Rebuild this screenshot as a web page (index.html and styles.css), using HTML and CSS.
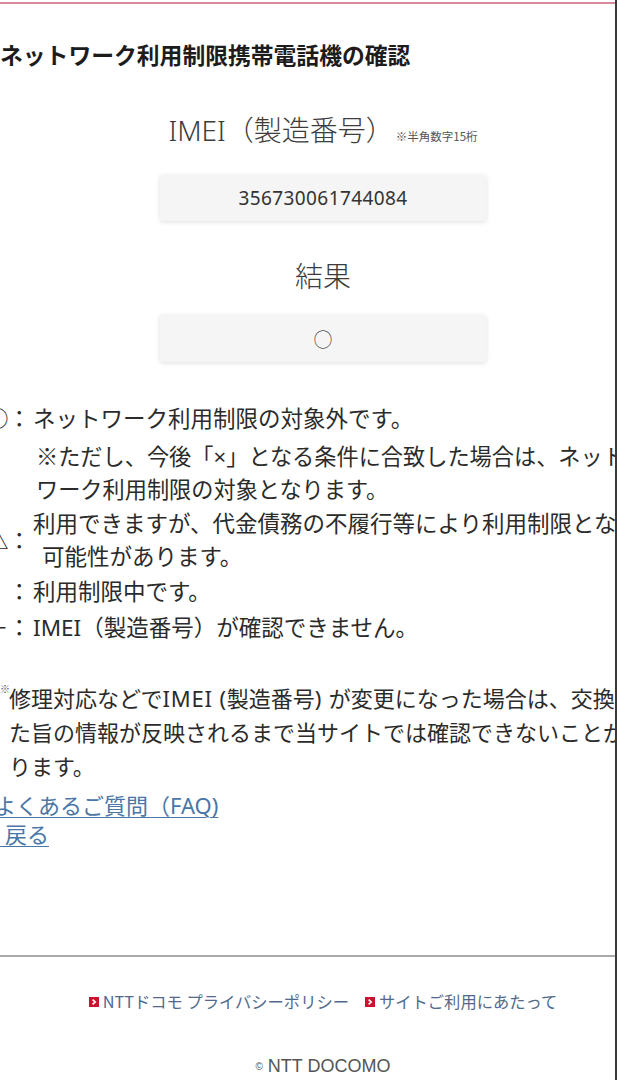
FILE: index.html
```html
<!DOCTYPE html>
<html lang="ja">
<head>
<meta charset="utf-8">
<title>ネットワーク利用制限携帯電話機の確認</title>
<link rel="stylesheet" href="styles.css">
</head>
<body>
<div class="page">
  <div class="topline"></div>
  <h1 class="title">ネットワーク利用制限携帯電話機の確認</h1>

  <div class="center">
    <div class="label">IMEI（製造番号）<span class="hint">※半角数字15桁</span></div>
    <div class="box box-imei">356730061744084</div>
    <div class="label label-result">結果</div>
    <div class="box box-result">○</div>
  </div>

  <div class="legend">
    <div class="item">
      <span class="mk"><span class="sym">○</span><span class="colon">：</span></span>
      <div class="txt"><div class="ln">ネットワーク利用制限の対象外です。</div></div>
    </div>
    <div class="subnote">
      <div class="ln">※ただし、今後「<span class="lat">×</span>」となる条件に合致した場合は、ネットワーク利用制限の</div>
      <div class="ln">ワーク利用制限の対象となります。</div>
    </div>
    <div class="item item-mid">
      <span class="mk"><span class="sym">△</span><span class="colon">：</span></span>
      <div class="txt">
        <div class="ln">利用できますが、代金債務の不履行等により利用制限となる</div>
        <div class="ln cont">可能性があります。</div>
      </div>
    </div>
    <div class="item item-x">
      <span class="mk"><span class="sym sym-x lat">×</span><span class="colon">：</span></span>
      <div class="txt"><div class="ln">利用制限中です。</div></div>
    </div>
    <div class="item item-dash">
      <span class="mk"><span class="sym">－</span><span class="colon">：</span></span>
      <div class="txt"><div class="ln"><span class="lat">IMEI</span>（製造番号）が確認できません。</div></div>
    </div>
  </div>

  <div class="note">
    <div class="nl"><span class="kome">※</span>修理対応などで<span class="lat wide">IMEI (</span>製造番号<span class="lat wide">) </span>が変更になった場合は、交換し</div>
    <div class="nl">た旨の情報が反映されるまで当サイトでは確認できないことがあ</div>
    <div class="nl">ります。</div>
  </div>

  <div class="links">
    <div class="lk"><a class="link link-faq" href="#">よくあるご質問（<span class="lat">FAQ)</span></a></div>
    <div class="lk"><a class="link link-back" href="#">&nbsp;戻る</a></div>
  </div>

  <hr class="rule">

  <div class="footer">
    <div class="flinks">
      <a class="flink" href="#"><svg class="ficon" width="10" height="10" viewBox="0 0 10 10"><rect width="10" height="10" fill="#c8142f"/><polyline points="3.6,2.6 6.2,5 3.6,7.4" fill="none" stroke="#fff" stroke-width="1.6"/></svg>NTTドコモ プライバシーポリシー</a>
      <a class="flink" href="#"><svg class="ficon" width="10" height="10" viewBox="0 0 10 10"><rect width="10" height="10" fill="#c8142f"/><polyline points="3.6,2.6 6.2,5 3.6,7.4" fill="none" stroke="#fff" stroke-width="1.6"/></svg>サイトご利用にあたって</a>
    </div>
    <div class="copy"><span class="c">©</span> NTT DOCOMO</div>
  </div>
</div>
</body>
</html>
```

FILE: styles.css
```css
html, body {
  margin: 0;
  padding: 0;
  overflow: hidden;
  background: #fff;
}
body {
  font-family: "Noto Sans CJK JP", sans-serif;
  color: #2b2b2b;
}
.lat {
  font-family: "Noto Sans", "Noto Sans CJK JP", sans-serif;
}
.wide {
  letter-spacing: 0.8px;
}
.page {
  width: 615px;
  min-height: 1080px;
  border-right: 2px solid #3a3a3a;
  overflow: hidden;
}
.topline {
  height: 2px;
  margin-top: 2px;
  background: #d9899c;
}
.title {
  margin: 36px 0 0 0;
  height: 30px;
  font-size: 22.8px;
  font-weight: 700;
  line-height: 30px;
  color: #1c1c1c;
  white-space: nowrap;
}
.center {
  width: 646px;
  text-align: center;
}
.label {
  margin-top: 42px;
  height: 36px;
  font-size: 28px;
  line-height: 36px;
  font-weight: 300;
  color: #3c3c3c;
  white-space: nowrap;
  font-family: "Noto Sans", "Noto Sans CJK JP", sans-serif;
}
.hint {
  font-family: "Noto Sans CJK JP", sans-serif;
  font-size: 11.5px;
  font-weight: 400;
  color: #555;
  margin-left: 2px;
}
.label-result {
  margin-top: 36px;
  font-family: "Noto Sans CJK JP", sans-serif;
}
.box {
  width: 326px;
  margin: 27px auto 0;
  height: 46px;
  line-height: 46px;
  background: #f5f5f5;
  border-radius: 2px;
  box-shadow: 0 1px 5px rgba(0, 0, 0, 0.13);
  color: #333;
}
.box-imei {
  font-family: "Noto Sans", sans-serif;
  font-size: 19px;
  letter-spacing: 0.4px;
}
.box-result {
  margin-top: 22px;
  height: 47px;
  line-height: 47px;
  font-size: 19px;
  color: #555;
}
.legend {
  margin-top: 39px;
  font-size: 22.5px;
  white-space: nowrap;
}
.ln {
  height: 33px;
  line-height: 33px;
}
.item {
  display: flex;
  align-items: flex-start;
  margin-top: 2px;
}
.item:first-child {
  margin-top: 0;
}
.item-mid {
  align-items: center;
  margin-top: 1px;
}
.item-x {
  margin-top: 2px;
}
.item-dash {
  margin-top: 3px;
}
.mk {
  display: flex;
  flex: none;
  width: 47px;
  height: 33px;
  line-height: 33px;
  margin-left: -14px;
}
.sym {
  width: 22px;
  text-align: left;
}
.colon {
  width: 22px;
}
.cont {
  padding-left: 9px;
}
.subnote {
  margin-top: 5px;
  padding-left: 36px;
  font-size: 22.2px;
}
.note {
  margin-top: 37px;
  font-size: 22px;
  white-space: nowrap;
  padding-left: 9px;
}
.nl {
  height: 34px;
  line-height: 34px;
}
.kome {
  display: inline-block;
  width: 9px;
  margin-left: -9px;
  font-size: 10px;
  line-height: 10px;
  vertical-align: 14px;
  color: #555;
}
.links {
  margin-top: 8px;
  font-size: 22px;
  white-space: nowrap;
}
.lk {
  height: 29px;
  line-height: 29px;
}
.link {
  display: inline-block;
  color: #4a76a8;
  text-decoration: underline;
  text-underline-offset: 3px;
  text-decoration-thickness: 1px;
}
.link-faq {
  margin-left: -6px;
}
.rule {
  margin: 107px 0 0 0;
  height: 2px;
  border: 0;
  background: #a9a9a9;
}
.footer {
  width: 646px;
}
.flinks {
  margin-top: 34px;
  height: 20px;
  display: flex;
  justify-content: center;
  gap: 16px;
  line-height: 20px;
  font-size: 16.3px;
  white-space: nowrap;
}
.flink {
  display: flex;
  align-items: center;
  gap: 4px;
  color: #52698b;
  text-decoration: none;
}
.ficon {
  flex: none;
  margin-top: 2px;
}
.copy {
  margin-top: 45px;
  height: 20px;
  text-align: center;
  font-family: "Liberation Sans", sans-serif;
  font-size: 18px;
  line-height: 20px;
  color: #555;
}
.c {
  font-size: 10px;
  vertical-align: 2px;
}
```
